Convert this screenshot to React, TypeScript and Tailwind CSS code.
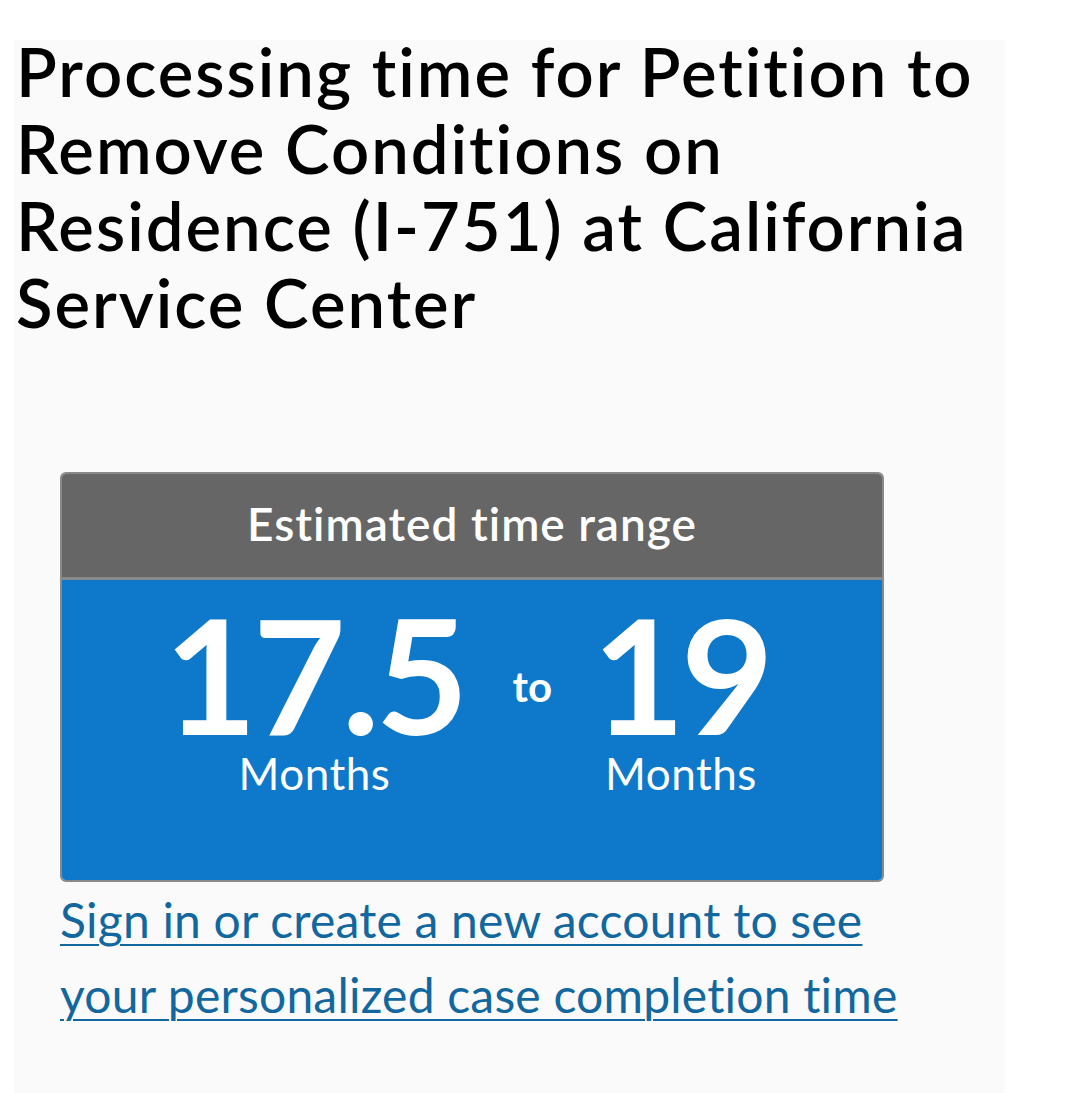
import React from "react";

const font = { fontFamily: "Lato, 'Noto Sans', sans-serif" };

function RangeValue({ value }: { value: string }) {
  return (
    <div className="flex flex-col items-center">
      <span className="text-[160px] font-bold leading-[140px] tracking-[-4px]">{value}</span>
      <span className="text-[44px] leading-[50px] tracking-[0.5px] mt-[5px]">Months</span>
    </div>
  );
}

export default function App() {
  return (
    <div
      className="h-screen overflow-hidden bg-white pt-[40px] pl-[14px] pr-[74px] [font-variant-ligatures:none]"
      style={font}
    >
      <div className="flow-root bg-[#fafafa] h-full pl-[2px]">
        <h1 className="-mt-[7px] text-[67px] font-semibold leading-[77px] tracking-[2px] text-black pr-2">
          Processing time for Petition to Remove Conditions on Residence (I-751) at California Service Center
        </h1>

        <div className="ml-[44px] mt-[131px]">
          <div className="w-[824px] rounded-[6px] border-2 border-[#8a8a8a] overflow-hidden">
            <div className="bg-[#666666] h-[106px] flex items-center justify-center border-b-[3px] border-[#8a8a8a]">
              <span className="text-white text-[46px] font-semibold tracking-[1px] -mt-[4px]">
                Estimated time range
              </span>
            </div>
            <div className="bg-[#0e79cb] h-[300px] text-white flex justify-center items-start pt-[23px] pr-[10px]">
              <RangeValue value="17.5" />
              <span className="text-[42px] font-bold leading-[40px] mt-[63px] ml-[48px] mr-[40px]">to</span>
              <RangeValue value="19" />
            </div>
          </div>
          <a
            href="#"
            className="block w-[880px] text-[48px] leading-[75px] tracking-[0.2px] text-[#13679f] underline underline-offset-[6px] decoration-2"
          >
            Sign in or create a new account to see your personalized case completion time
          </a>
        </div>
      </div>
    </div>
  );
}
